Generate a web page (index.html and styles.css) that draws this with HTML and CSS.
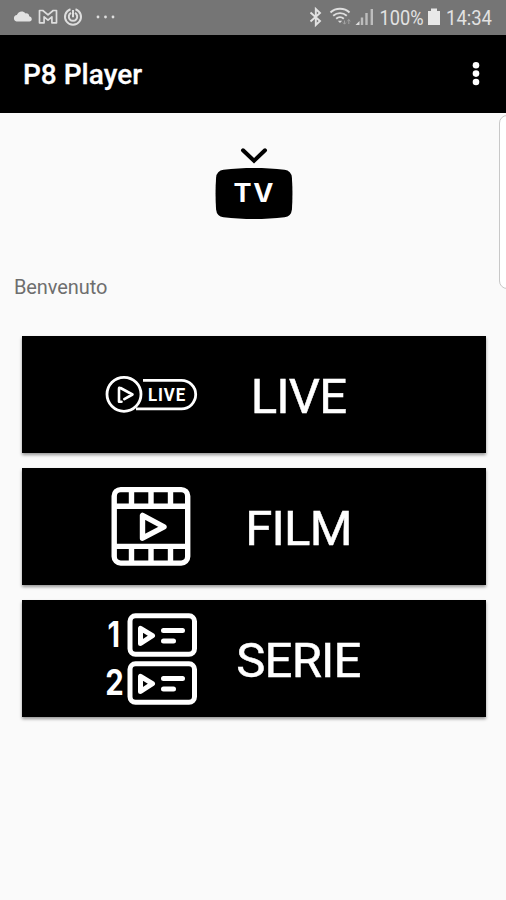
FILE: index.html
```html
<!DOCTYPE html>
<html lang="it">
<head>
  <meta charset="UTF-8" />
  <title>P8 Player</title>
  <meta name="viewport" content="width=device-width, initial-scale=1" />
  <link rel="stylesheet" href="styles.css">
</head>
<body>
  <div class="status-bar">
    <svg class="status-left" width="120" height="35" viewBox="0 0 120 35">
      <path d="M16.500 21.500a3.300 3.300 0 0 1 .4-6.500c1-3.500 5.800-5.200 8.600-1.600 2.500-.3 3.600 1.200 3.700 2.800 3.500.7 3.300 5.300.3 5.300z" fill="#e2e2e2" />
      <path d="M39.500 10.500h3.300l5.200 4.400 5.200-4.400h3.300v12.300h-4.600v-6l-3.900 3.300-3.900-3.300v6h-4.600z" fill="none" stroke="#dedede" stroke-width="1.700" stroke-linejoin="round" />
      <g fill="none" stroke="#dedede" stroke-width="2">
        <path d="M75.500 9.200A8 8 0 1 1 70.500 9.200" />
        <path d="M75 12.900a4.200 4.200 0 1 1-4 0M73 10v7.200" />
      </g>
      <g fill="#dedede">
        <circle cx="98" cy="17" r="1.400" />
        <circle cx="105.500" cy="17" r="1.400" />
        <circle cx="113" cy="17" r="1.400" />
      </g>
    </svg>
    <svg class="status-right" width="200" height="35" viewBox="300 0 200 35">
      <path d="M310.500 12.500l9.500 8.500-4.200 4v-16l4.200 4-9.500 8.500" fill="none" stroke="#e2e2e2" stroke-width="1.900" />
      <g fill="none" stroke="#dedede" stroke-width="1.900">
        <path d="M330.500 12.500c5-5 14-5 19 0" />
        <path d="M333.200 15.800c4-3.600 9.600-3.600 13.600 0" />
        <path d="M336.200 18.800c2.200-2 5.400-2 7.600 0" />
      </g>
      <path d="M337.800 20.700h4.400l-2.200 2.300z" fill="#dedede" />
      <path d="M344.500 20.500v3.500m-1.500-1.500l1.500 1.700 1.500-1.700M348.800 24v-4.500m-1.500 1.800l1.500-1.700 1.500 1.700" fill="none" stroke="#a2a2a2" />
      <path d="M355.500 25l4-4v4z" fill="#dedede" />
      <path d="M362 25v-7.500M366.500 25V13M371.800 25V9" stroke="#bdbdbd" stroke-width="2.400" />
      <text x="379.500" y="24.800" textLength="44" lengthAdjust="spacingAndGlyphs">100%</text>
      <path d="M428 11h3V8.500h6V11h3v14h-12z" fill="#e8e8e8" />
      <text x="446" y="24.800" textLength="46" lengthAdjust="spacingAndGlyphs">14:34</text>
    </svg>
  </div>

  <header class="app-bar">
    <h1>P8 Player</h1>
    <svg class="more" width="8" height="24" viewBox="0 0 8 24" fill="#fff">
      <circle cx="4" cy="3.200" r="3.300" />
      <circle cx="4" cy="11.600" r="3.300" />
      <circle cx="4" cy="20" r="3.300" />
    </svg>
  </header>

  <main class="content">
    <div class="edge-panel"></div>

    <svg class="logo" width="78" height="72" viewBox="0 0 78 72">
      <path d="M28 2.300l11 10.500L50 2.300" fill="none" stroke="#000" stroke-width="4" stroke-linecap="round" />
      <path d="M8.500 21.700C28 19.300 50 19.300 69.500 21.700Q76.300 22.700 76.900 29.500Q78 45.500 76.900 61.500Q76.300 68.300 69.500 69.300C50 71.700 28 71.700 8.500 69.300Q1.700 68.300 1.100 61.500Q0 45.500 1.100 29.500Q1.700 22.700 8.500 21.700z" />
      <text x="18.500" y="54" textLength="41.500" lengthAdjust="spacingAndGlyphs">TV</text>
    </svg>

    <p class="welcome">Benvenuto</p>

    <nav class="menu">
      <button type="button" class="menu-item">
        <svg width="92" height="92" viewBox="0 0 92 92" fill="none" stroke="#fff" stroke-width="2.800">
          <circle cx="18" cy="45.300" r="17" />
          <path d="M37 31.400H75.500a14.200 14.200 0 0 1 0 28.400H30" />
          <path d="M15.500 52.800H13V39.800q0-1.700 1.500-.8L26.500 45.500l-8.200 4.600" stroke-width="2.600" stroke-linejoin="round" stroke-linecap="round" />
          <text class="live-label" x="42" y="52.300" textLength="38" lengthAdjust="spacingAndGlyphs">LIVE</text>
        </svg>
        <span>LIVE</span>
      </button>

      <button type="button" class="menu-item">
        <svg width="92" height="92" viewBox="0 0 92 92" fill="none" stroke="#fff" stroke-width="5.400">
          <rect x="8.200" y="8.600" width="73.500" height="73.500" rx="6.500" />
          <path d="M8 25.200h74M8 65.400h74" />
          <path d="M25.500 8v17M45 8v17M64.500 8v17M25.500 65v17M45 65v17M64.500 65v17" />
          <path d="M36.500 34.400v22.800l21.500-11.400z" stroke-linejoin="round" />
        </svg>
        <span>FILM</span>
      </button>

      <button type="button" class="menu-item">
        <svg width="92" height="92" viewBox="0 0 92 92" fill="none" stroke="#fff" stroke-width="5">
          <rect x="24" y="2.800" width="64.500" height="38.500" rx="5.500" />
          <rect x="24" y="50.800" width="64.500" height="38.500" rx="5.500" />
          <path d="M34.500 15.300v15.200L46.500 22.700zM34.500 63.300v15.200L46.500 70.700z" stroke-width="5" stroke-linejoin="round" />
          <path d="M57.500 17.500h19M57.500 28h10M57.500 65.500h19M57.500 76h10" stroke-linecap="round" />
          <text class="series-number" x="1.500" y="34" textLength="12.500" lengthAdjust="spacingAndGlyphs">1</text>
          <text class="series-number" x="-.8" y="82" textLength="18.500" lengthAdjust="spacingAndGlyphs">2</text>
        </svg>
        <span>SERIE</span>
      </button>
    </nav>
  </main>
</body>
</html>
```
FILE: styles.css
```css
* {
  box-sizing: border-box;
}

body {
  margin: 0;
  height: 100vh;
  display: flex;
  flex-direction: column;
  overflow: hidden;
  background: #fafafa;
  font-family: Roboto, sans-serif;
}

svg {
  overflow: visible;
}

.status-bar {
  display: flex;
  justify-content: space-between;
  height: 35px;
  padding-right: 6px;
  background: #757575;
}

.status-bar text {
  fill: #e2e2e2;
  font-size: 20.5px;
}

.app-bar {
  display: flex;
  align-items: center;
  justify-content: space-between;
  height: 78px;
  padding: 0 26px 0 23px;
  background: #000;
}

h1 {
  margin: 0;
  color: #fff;
  font-size: 28px;
  font-weight: 500;
  -webkit-text-stroke: 0.3px #fff;
}

.content {
  position: relative;
  flex: 1;
  display: flex;
  flex-direction: column;
  padding: 35px 20px 0 22px;
}

/* handle of the side panel, sits over the page */
.edge-panel {
  position: absolute;
  top: 2px;
  right: -12px;
  width: 19px;
  height: 174px;
  border: 1px solid #c8c8c8;
  border-radius: 8px;
  background: #fff;
}

.logo {
  align-self: center;
}

.logo text {
  fill: #fff;
  font-family: Inter, sans-serif;
  font-size: 25px;
  font-weight: 700;
  letter-spacing: 1.5px;
}

.welcome {
  margin: 55px 0 0 -8px;
  color: #6e6e6e;
  font-size: 20px;
  line-height: 24px;
  letter-spacing: -0.1px;
}

.menu {
  display: flex;
  flex-direction: column;
  gap: 15px;
  margin-top: 37px;
}

.menu-item {
  display: grid;
  grid-template-columns: 92px 201px;
  align-items: center;
  height: 117px;
  padding: 0 0 0 84px;
  border: none;
  background: #000;
  box-shadow: 0 2px 3px rgba(0, 0, 0, 0.4);
  color: #fff;
  font-family: inherit;
  font-size: 49px;
  letter-spacing: -0.8px;
  text-align: center;
  -webkit-text-stroke: 0.5px #fff;
}

.menu-item span {
  padding-top: 3px;
}

.menu-item text {
  fill: #fff;
  stroke: none;
  -webkit-text-stroke: 0;
}

.menu-item .live-label {
  font-family: Roboto, sans-serif;
  font-size: 19px;
  font-weight: 700;
  letter-spacing: 1px;
}

.menu-item .series-number {
  font-family: Inter, sans-serif;
  font-size: 35px;
  font-weight: 700;
  letter-spacing: 0;
}
```
